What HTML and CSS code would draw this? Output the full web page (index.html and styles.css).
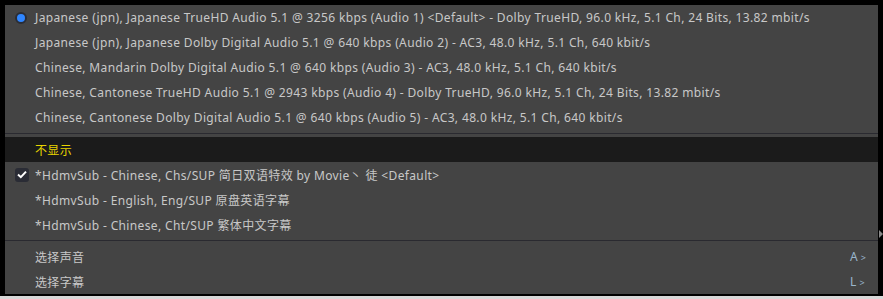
FILE: index.html
```html
<!DOCTYPE html>
<html lang="zh-CN">
<head>
    <meta charset="UTF-8">
    <title>Track Menu</title>
    <link rel="stylesheet" href="styles.css">
</head>
<body>
    <div class="screen">
        <div class="menu">
            <div class="item">
                <span class="mark"><span class="radio"></span></span>
                <span class="label">Japanese (jpn), Japanese TrueHD Audio 5.1 @ 3256 kbps (Audio 1) &lt;Default&gt; - Dolby TrueHD, 96.0 kHz, 5.1 Ch, 24 Bits, 13.82 mbit/s</span>
            </div>
            <div class="item">
                <span class="mark"></span>
                <span class="label">Japanese (jpn), Japanese Dolby Digital Audio 5.1 @ 640 kbps (Audio 2) - AC3, 48.0 kHz, 5.1 Ch, 640 kbit/s</span>
            </div>
            <div class="item">
                <span class="mark"></span>
                <span class="label">Chinese, Mandarin Dolby Digital Audio 5.1 @ 640 kbps (Audio 3) - AC3, 48.0 kHz, 5.1 Ch, 640 kbit/s</span>
            </div>
            <div class="item">
                <span class="mark"></span>
                <span class="label">Chinese, Cantonese TrueHD Audio 5.1 @ 2943 kbps (Audio 4) - Dolby TrueHD, 96.0 kHz, 5.1 Ch, 24 Bits, 13.82 mbit/s</span>
            </div>
            <div class="item">
                <span class="mark"></span>
                <span class="label">Chinese, Cantonese Dolby Digital Audio 5.1 @ 640 kbps (Audio 5) - AC3, 48.0 kHz, 5.1 Ch, 640 kbit/s</span>
            </div>
            <div class="sep"></div>
            <div class="item active">
                <span class="mark"></span>
                <span class="label">不显示</span>
            </div>
            <div class="item">
                <span class="mark">
                    <span class="check">
                        <svg width="10" height="9" viewBox="0 0 10 9"><path d="M1 4.6 L3.8 7.2 L9 1.6" fill="none" stroke="#fff" stroke-width="2"/></svg>
                    </span>
                </span>
                <span class="label">*HdmvSub - Chinese, Chs/SUP 简日双语特效 by Movie丶 徒 &lt;Default&gt;</span>
            </div>
            <div class="item">
                <span class="mark"></span>
                <span class="label">*HdmvSub - English, Eng/SUP 原盘英语字幕</span>
            </div>
            <div class="item">
                <span class="mark"></span>
                <span class="label">*HdmvSub - Chinese, Cht/SUP 繁体中文字幕</span>
            </div>
            <div class="sep"></div>
            <div class="item">
                <span class="mark"></span>
                <span class="label">选择声音</span>
                <span class="key">A <small>&gt;</small></span>
            </div>
            <div class="item">
                <span class="mark"></span>
                <span class="label">选择字幕</span>
                <span class="key">L <small>&gt;</small></span>
            </div>
        </div>
        <div class="side">
            <span class="arrow"></span>
        </div>
    </div>
    <div class="strip"></div>
</body>
</html>
```

FILE: styles.css
```css
body {
    margin: 0;
    background: #000;
    font-family: "Noto Sans", "Noto Sans CJK SC", sans-serif;
    font-size: 12px;
    letter-spacing: 0.36px;
    color: #c8c8c8;
    width: 883px;
    height: 299px;
    overflow: hidden;
}

.screen {
    display: flex;
    padding: 5px 0 0 5px;
    height: 289px;
}

.menu {
    width: 873px;
    height: 289px;
    background: #444444;
    display: flex;
    flex-direction: column;
}

.item {
    display: flex;
    align-items: center;
    height: 25px;
    flex-shrink: 0;
}

.item.active {
    background: #1b1b1b;
}

.item.active .label {
    color: #e8d400;
}

.mark {
    width: 30px;
    display: flex;
    justify-content: center;
    align-items: center;
    flex-shrink: 0;
}

.radio {
    width: 8px;
    height: 8px;
    border-radius: 50%;
    background: #2f86ff;
    border: 2px solid #2a2d36;
    margin-left: 1px;
}

.check {
    width: 14px;
    height: 14px;
    border-radius: 3px;
    background: #2a2c35;
    display: flex;
    justify-content: center;
    align-items: center;
    margin-left: 3px;
    flex-shrink: 0;
}

.label {
    white-space: nowrap;
    flex: 1;
}

.key {
    width: 24px;
    margin-right: 4px;
    flex-shrink: 0;
    color: #9ab6cc;
    font-size: 12px;
    letter-spacing: 0;
}

.key small {
    font-size: 9px;
}

.sep {
    height: 7px;
    flex-shrink: 0;
    display: flex;
    align-items: center;
}

.sep::before {
    content: "";
    display: block;
    width: 100%;
    height: 1px;
    background: #2a2a30;
}

.side {
    width: 5px;
    position: relative;
}

.arrow {
    position: absolute;
    top: 225px;
    left: 1px;
    width: 0;
    height: 0;
    border-top: 4px solid transparent;
    border-bottom: 4px solid transparent;
    border-left: 4px solid #888;
}

.strip {
    height: 3px;
    margin-top: 2px;
    background: #d8d8d8;
}
```
